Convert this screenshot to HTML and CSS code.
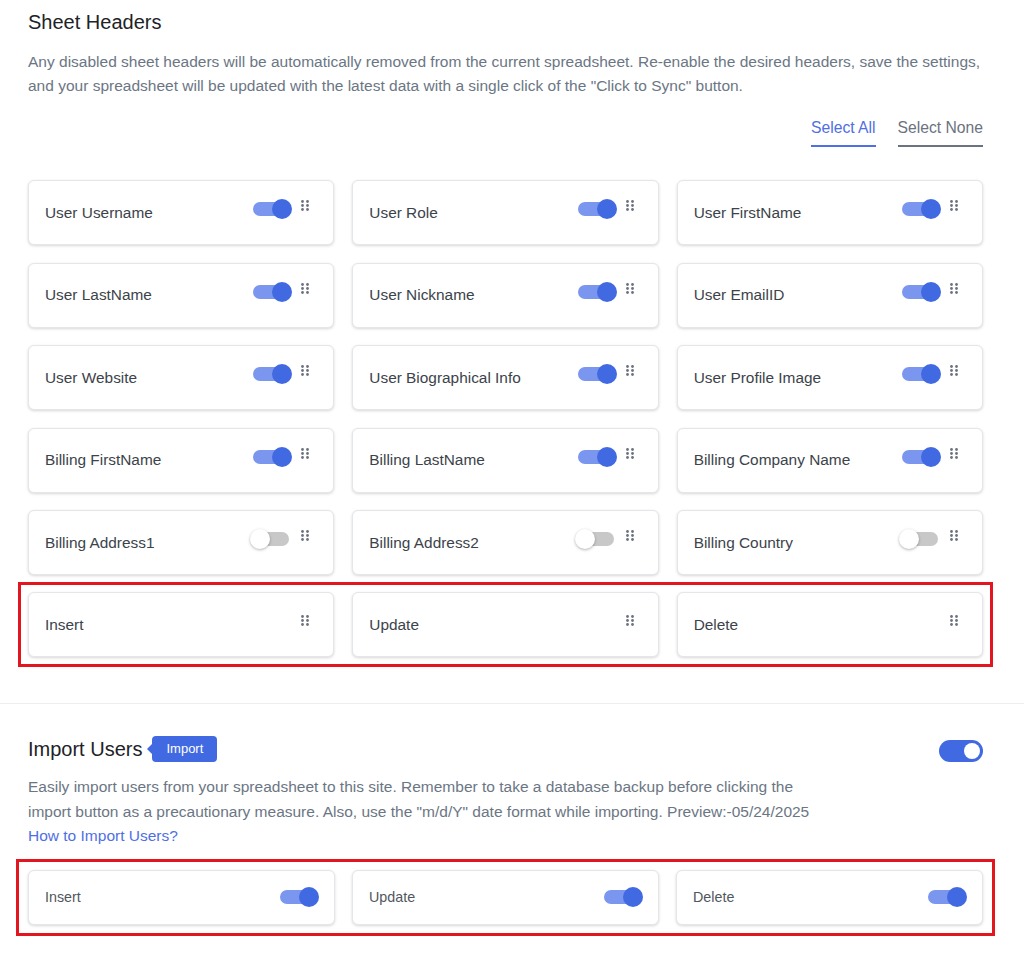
FILE: index.html
```html
<!DOCTYPE html>
<html lang="en">
<head>
    <meta charset="UTF-8">
    <meta name="viewport" content="width=device-width, initial-scale=1.0">
    <title>Sheet Headers</title>
    <link rel="stylesheet" href="styles.css">
</head>
<body>
    <div class="section">
        <h2 class="section-title">Sheet Headers</h2>
        <p class="section-desc">Any disabled sheet headers will be automatically removed from the current spreadsheet. Re-enable the desired headers, save the settings, and your spreadsheet will be updated with the latest data with a single click of the "Click to Sync" button.</p>
        <div class="select-links">
            <a href="#" class="select-all">Select All</a>
            <a href="#" class="select-none">Select None</a>
        </div>

        <div class="header-grid">
            <div class="header-card"><span>User Username</span><div class="controls"><span class="toggle on"></span><svg class="drag" width="8" height="11" viewBox="0 0 8 11"><circle cx="1.5" cy="1.5" r="1.4"/><circle cx="6.5" cy="1.5" r="1.4"/><circle cx="1.5" cy="5.5" r="1.4"/><circle cx="6.5" cy="5.5" r="1.4"/><circle cx="1.5" cy="9.5" r="1.4"/><circle cx="6.5" cy="9.5" r="1.4"/></svg></div></div>
            <div class="header-card"><span>User Role</span><div class="controls"><span class="toggle on"></span><svg class="drag" width="8" height="11" viewBox="0 0 8 11"><circle cx="1.5" cy="1.5" r="1.4"/><circle cx="6.5" cy="1.5" r="1.4"/><circle cx="1.5" cy="5.5" r="1.4"/><circle cx="6.5" cy="5.5" r="1.4"/><circle cx="1.5" cy="9.5" r="1.4"/><circle cx="6.5" cy="9.5" r="1.4"/></svg></div></div>
            <div class="header-card"><span>User FirstName</span><div class="controls"><span class="toggle on"></span><svg class="drag" width="8" height="11" viewBox="0 0 8 11"><circle cx="1.5" cy="1.5" r="1.4"/><circle cx="6.5" cy="1.5" r="1.4"/><circle cx="1.5" cy="5.5" r="1.4"/><circle cx="6.5" cy="5.5" r="1.4"/><circle cx="1.5" cy="9.5" r="1.4"/><circle cx="6.5" cy="9.5" r="1.4"/></svg></div></div>

            <div class="header-card"><span>User LastName</span><div class="controls"><span class="toggle on"></span><svg class="drag" width="8" height="11" viewBox="0 0 8 11"><circle cx="1.5" cy="1.5" r="1.4"/><circle cx="6.5" cy="1.5" r="1.4"/><circle cx="1.5" cy="5.5" r="1.4"/><circle cx="6.5" cy="5.5" r="1.4"/><circle cx="1.5" cy="9.5" r="1.4"/><circle cx="6.5" cy="9.5" r="1.4"/></svg></div></div>
            <div class="header-card"><span>User Nickname</span><div class="controls"><span class="toggle on"></span><svg class="drag" width="8" height="11" viewBox="0 0 8 11"><circle cx="1.5" cy="1.5" r="1.4"/><circle cx="6.5" cy="1.5" r="1.4"/><circle cx="1.5" cy="5.5" r="1.4"/><circle cx="6.5" cy="5.5" r="1.4"/><circle cx="1.5" cy="9.5" r="1.4"/><circle cx="6.5" cy="9.5" r="1.4"/></svg></div></div>
            <div class="header-card"><span>User EmailID</span><div class="controls"><span class="toggle on"></span><svg class="drag" width="8" height="11" viewBox="0 0 8 11"><circle cx="1.5" cy="1.5" r="1.4"/><circle cx="6.5" cy="1.5" r="1.4"/><circle cx="1.5" cy="5.5" r="1.4"/><circle cx="6.5" cy="5.5" r="1.4"/><circle cx="1.5" cy="9.5" r="1.4"/><circle cx="6.5" cy="9.5" r="1.4"/></svg></div></div>

            <div class="header-card"><span>User Website</span><div class="controls"><span class="toggle on"></span><svg class="drag" width="8" height="11" viewBox="0 0 8 11"><circle cx="1.5" cy="1.5" r="1.4"/><circle cx="6.5" cy="1.5" r="1.4"/><circle cx="1.5" cy="5.5" r="1.4"/><circle cx="6.5" cy="5.5" r="1.4"/><circle cx="1.5" cy="9.5" r="1.4"/><circle cx="6.5" cy="9.5" r="1.4"/></svg></div></div>
            <div class="header-card"><span>User Biographical Info</span><div class="controls"><span class="toggle on"></span><svg class="drag" width="8" height="11" viewBox="0 0 8 11"><circle cx="1.5" cy="1.5" r="1.4"/><circle cx="6.5" cy="1.5" r="1.4"/><circle cx="1.5" cy="5.5" r="1.4"/><circle cx="6.5" cy="5.5" r="1.4"/><circle cx="1.5" cy="9.5" r="1.4"/><circle cx="6.5" cy="9.5" r="1.4"/></svg></div></div>
            <div class="header-card"><span>User Profile Image</span><div class="controls"><span class="toggle on"></span><svg class="drag" width="8" height="11" viewBox="0 0 8 11"><circle cx="1.5" cy="1.5" r="1.4"/><circle cx="6.5" cy="1.5" r="1.4"/><circle cx="1.5" cy="5.5" r="1.4"/><circle cx="6.5" cy="5.5" r="1.4"/><circle cx="1.5" cy="9.5" r="1.4"/><circle cx="6.5" cy="9.5" r="1.4"/></svg></div></div>

            <div class="header-card"><span>Billing FirstName</span><div class="controls"><span class="toggle on"></span><svg class="drag" width="8" height="11" viewBox="0 0 8 11"><circle cx="1.5" cy="1.5" r="1.4"/><circle cx="6.5" cy="1.5" r="1.4"/><circle cx="1.5" cy="5.5" r="1.4"/><circle cx="6.5" cy="5.5" r="1.4"/><circle cx="1.5" cy="9.5" r="1.4"/><circle cx="6.5" cy="9.5" r="1.4"/></svg></div></div>
            <div class="header-card"><span>Billing LastName</span><div class="controls"><span class="toggle on"></span><svg class="drag" width="8" height="11" viewBox="0 0 8 11"><circle cx="1.5" cy="1.5" r="1.4"/><circle cx="6.5" cy="1.5" r="1.4"/><circle cx="1.5" cy="5.5" r="1.4"/><circle cx="6.5" cy="5.5" r="1.4"/><circle cx="1.5" cy="9.5" r="1.4"/><circle cx="6.5" cy="9.5" r="1.4"/></svg></div></div>
            <div class="header-card"><span>Billing Company Name</span><div class="controls"><span class="toggle on"></span><svg class="drag" width="8" height="11" viewBox="0 0 8 11"><circle cx="1.5" cy="1.5" r="1.4"/><circle cx="6.5" cy="1.5" r="1.4"/><circle cx="1.5" cy="5.5" r="1.4"/><circle cx="6.5" cy="5.5" r="1.4"/><circle cx="1.5" cy="9.5" r="1.4"/><circle cx="6.5" cy="9.5" r="1.4"/></svg></div></div>

            <div class="header-card"><span>Billing Address1</span><div class="controls"><span class="toggle"></span><svg class="drag" width="8" height="11" viewBox="0 0 8 11"><circle cx="1.5" cy="1.5" r="1.4"/><circle cx="6.5" cy="1.5" r="1.4"/><circle cx="1.5" cy="5.5" r="1.4"/><circle cx="6.5" cy="5.5" r="1.4"/><circle cx="1.5" cy="9.5" r="1.4"/><circle cx="6.5" cy="9.5" r="1.4"/></svg></div></div>
            <div class="header-card"><span>Billing Address2</span><div class="controls"><span class="toggle"></span><svg class="drag" width="8" height="11" viewBox="0 0 8 11"><circle cx="1.5" cy="1.5" r="1.4"/><circle cx="6.5" cy="1.5" r="1.4"/><circle cx="1.5" cy="5.5" r="1.4"/><circle cx="6.5" cy="5.5" r="1.4"/><circle cx="1.5" cy="9.5" r="1.4"/><circle cx="6.5" cy="9.5" r="1.4"/></svg></div></div>
            <div class="header-card"><span>Billing Country</span><div class="controls"><span class="toggle"></span><svg class="drag" width="8" height="11" viewBox="0 0 8 11"><circle cx="1.5" cy="1.5" r="1.4"/><circle cx="6.5" cy="1.5" r="1.4"/><circle cx="1.5" cy="5.5" r="1.4"/><circle cx="6.5" cy="5.5" r="1.4"/><circle cx="1.5" cy="9.5" r="1.4"/><circle cx="6.5" cy="9.5" r="1.4"/></svg></div></div>
        </div>

        <div class="highlight first">
            <div class="header-grid">
                <div class="header-card"><span>Insert</span><div class="controls"><svg class="drag" width="8" height="11" viewBox="0 0 8 11"><circle cx="1.5" cy="1.5" r="1.4"/><circle cx="6.5" cy="1.5" r="1.4"/><circle cx="1.5" cy="5.5" r="1.4"/><circle cx="6.5" cy="5.5" r="1.4"/><circle cx="1.5" cy="9.5" r="1.4"/><circle cx="6.5" cy="9.5" r="1.4"/></svg></div></div>
                <div class="header-card"><span>Update</span><div class="controls"><svg class="drag" width="8" height="11" viewBox="0 0 8 11"><circle cx="1.5" cy="1.5" r="1.4"/><circle cx="6.5" cy="1.5" r="1.4"/><circle cx="1.5" cy="5.5" r="1.4"/><circle cx="6.5" cy="5.5" r="1.4"/><circle cx="1.5" cy="9.5" r="1.4"/><circle cx="6.5" cy="9.5" r="1.4"/></svg></div></div>
                <div class="header-card"><span>Delete</span><div class="controls"><svg class="drag" width="8" height="11" viewBox="0 0 8 11"><circle cx="1.5" cy="1.5" r="1.4"/><circle cx="6.5" cy="1.5" r="1.4"/><circle cx="1.5" cy="5.5" r="1.4"/><circle cx="6.5" cy="5.5" r="1.4"/><circle cx="1.5" cy="9.5" r="1.4"/><circle cx="6.5" cy="9.5" r="1.4"/></svg></div></div>
            </div>
        </div>
    </div>

    <hr class="divider">

    <div class="section">
        <div class="import-head">
            <h2 class="section-title">Import Users</h2>
            <span class="badge">Import</span>
            <span class="big-toggle"></span>
        </div>
        <p class="section-desc import-desc">Easily import users from your spreadsheet to this site. Remember to take a database backup before clicking the import button as a precautionary measure. Also, use the "m/d/Y" date format while importing. Preview:-05/24/2025<br><a href="#" class="help-link">How to Import Users?</a></p>

        <div class="highlight second">
            <div class="import-grid">
                <div class="import-card"><span>Insert</span><span class="toggle on"></span></div>
                <div class="import-card"><span>Update</span><span class="toggle on"></span></div>
                <div class="import-card"><span>Delete</span><span class="toggle on"></span></div>
            </div>
        </div>
    </div>
</body>
</html>
```

FILE: styles.css
```css
body {
    margin: 0;
    font-family: "Liberation Sans", Arial, sans-serif;
    background-color: #ffffff;
    color: #3c434a;
}

.section {
    width: 955px;
    padding-left: 28px;
}

.section-title {
    margin: 10px 0 0;
    font-size: 20px;
    font-weight: normal;
    line-height: 24px;
    color: #1d2327;
}

.section-desc {
    margin: 16px 0 0;
    font-size: 15.5px;
    line-height: 24px;
    color: #6b7684;
}

.select-links {
    display: flex;
    justify-content: flex-end;
    gap: 22px;
    margin-top: 20px;
}

.select-links a {
    font-size: 15.7px;
    line-height: 20px;
    text-decoration: none;
    padding-bottom: 7px;
    border-bottom: 2px solid;
}

.select-all {
    color: #4f6fe3;
    border-color: #5878e8;
}

.select-none {
    color: #6b7280;
    border-color: #7a808a;
}

.header-grid {
    display: grid;
    grid-template-columns: repeat(3, 1fr);
    column-gap: 18px;
    row-gap: 17.6px;
    margin-top: 33px;
}

.highlight .header-grid {
    margin-top: 0;
}

.header-card,
.import-card {
    display: flex;
    align-items: center;
    justify-content: space-between;
    background-color: #fff;
    border: 1px solid #e4e6ea;
    border-radius: 6px;
    box-shadow: 0 1px 3px rgba(0, 0, 0, 0.16);
    box-sizing: border-box;
}

.header-card {
    height: 65px;
    padding: 0 24px 0 16px;
    font-size: 15.4px;
}

.controls {
    display: flex;
    align-items: flex-start;
    gap: 9px;
    padding-bottom: 7px;
}

.drag {
    fill: #6b7280;
    margin-top: -2px;
}

.toggle {
    position: relative;
    display: inline-block;
    width: 36px;
    height: 14px;
    border-radius: 7px;
    background-color: #c8c8c8;
    margin-right: 3px;
}

.toggle::after {
    content: "";
    position: absolute;
    top: -3px;
    left: -3px;
    width: 20px;
    height: 20px;
    border-radius: 50%;
    background-color: #fff;
    box-shadow: 0 1px 3px rgba(0, 0, 0, 0.3);
}

.toggle.on {
    background-color: #7b96ee;
}

.toggle.on::after {
    left: auto;
    right: -3px;
    background-color: #4169e1;
    box-shadow: none;
}

.highlight {
    border: 3px solid #e3161f;
}

.highlight.first {
    margin: 7px -10px 0;
    padding: 7px;
}

.divider {
    margin: 36px 0 0;
    border: none;
    border-top: 1px solid #eceef2;
}

.import-head {
    display: flex;
    align-items: center;
    margin-top: 32px;
}

.import-head .section-title {
    margin: 0;
}

.badge {
    position: relative;
    margin-left: 10px;
    padding: 0 14px;
    height: 26px;
    line-height: 26px;
    font-size: 13px;
    color: #fff;
    background-color: #4169e1;
    border-radius: 4px;
}

.badge::before {
    content: "";
    position: absolute;
    left: -5px;
    top: 8px;
    border-style: solid;
    border-width: 5px 5px 5px 0;
    border-color: transparent #4169e1 transparent transparent;
}

.big-toggle {
    position: relative;
    margin-left: auto;
    margin-top: 4px;
    width: 44px;
    height: 22px;
    border-radius: 11px;
    background-color: #4169e1;
}

.big-toggle::after {
    content: "";
    position: absolute;
    top: 3px;
    right: 3px;
    width: 16px;
    height: 16px;
    border-radius: 50%;
    background-color: #fff;
}

.import-desc {
    margin-top: 13px;
    max-width: 795px;
    line-height: 24.5px;
}

.help-link {
    color: #4f6fe3;
    text-decoration: none;
}

.highlight.second {
    margin: 10px -12px 0;
    padding: 8px 9px;
}

.import-grid {
    display: grid;
    grid-template-columns: repeat(3, 1fr);
    column-gap: 17px;
}

.import-card {
    height: 55px;
    padding: 0 15px 0 16px;
    font-size: 14.3px;
    color: #50575e;
}
```
